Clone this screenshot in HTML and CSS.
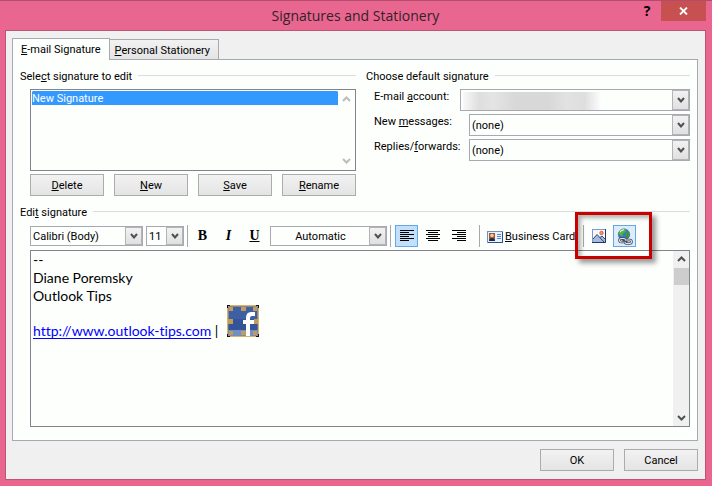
FILE: index.html
```
<!DOCTYPE html>
<html lang="en">
<head>
  <meta charset="UTF-8" />
  <title>Signatures and Stationery</title>
  <meta name="viewport" content="width=device-width, initial-scale=1.0"/>
  <link rel="stylesheet" href="styles.css">
</head>
<body>
  <div class="window">
    <header class="titlebar">
      <h1>Signatures and Stationery</h1>
      <div class="window-buttons">
        <button class="help" aria-label="Help">?</button>
        <button class="close" aria-label="Close">
          <svg width="9" height="8" viewBox="0 0 9 8"><path d="M1 0.5 L8 7.5 M8 0.5 L1 7.5" stroke="#fff" stroke-width="1.8"/></svg>
        </button>
      </div>
    </header>

    <main class="dialog">
      <nav class="tabs">
        <button class="tab active"><u>E</u>-mail Signature</button>
        <button class="tab"><u>P</u>ersonal Stationery</button>
      </nav>

      <div class="panel">
        <div class="top">
          <section>
            <div class="group-title"><label for="sigList">Sele<u>c</u>t signature to edit</label></div>
            <div class="list-box">
              <select id="sigList" size="4">
                <option selected>New Signature</option>
              </select>
              <div class="scroll disabled">
                <svg width="9" height="6" viewBox="0 0 9 6"><path d="M1 5 L4.500 1.500 L8 5"/></svg>
                <svg width="9" height="6" viewBox="0 0 9 6"><path d="M1 1 L4.500 4.500 L8 1"/></svg>
              </div>
            </div>
            <div class="list-actions">
              <button class="btn"><u>D</u>elete</button>
              <button class="btn"><u>N</u>ew</button>
              <button class="btn"><u>S</u>ave</button>
              <button class="btn"><u>R</u>ename</button>
            </div>
          </section>

          <section>
            <div class="group-title"><span>Choose default signature</span></div>
            <div class="defaults">
              <div class="field">
                <label for="account">E-mail <u>a</u>ccount:</label>
                <div class="combo wide">
                  <select id="account"><option></option></select>
                  <span class="hidden-account"></span>
                  <span class="arrow"><svg width="8" height="6" viewBox="0 0 8 6"><path d="M1 1 L4 4.500 L7 1"/></svg></span>
                </div>
              </div>
              <div class="field">
                <label for="newMsg">New <u>m</u>essages:</label>
                <div class="combo">
                  <select id="newMsg"><option>(none)</option></select>
                  <span class="arrow"><svg width="8" height="6" viewBox="0 0 8 6"><path d="M1 1 L4 4.500 L7 1"/></svg></span>
                </div>
              </div>
              <div class="field">
                <label for="replies">Replies/<u>f</u>orwards:</label>
                <div class="combo">
                  <select id="replies"><option>(none)</option></select>
                  <span class="arrow"><svg width="8" height="6" viewBox="0 0 8 6"><path d="M1 1 L4 4.500 L7 1"/></svg></span>
                </div>
              </div>
            </div>
          </section>
        </div>

        <div class="group-title edit-title"><span id="editLabel">Edi<u>t</u> signature</span></div>

        <div class="toolbar">
          <div class="combo font">
            <select aria-label="Font"><option>Calibri (Body)</option></select>
            <span class="arrow"><svg width="8" height="6" viewBox="0 0 8 6"><path d="M1 1 L4 4.500 L7 1"/></svg></span>
          </div>
          <div class="combo size">
            <select aria-label="Font size"><option>11</option></select>
            <span class="arrow"><svg width="8" height="6" viewBox="0 0 8 6"><path d="M1 1 L4 4.500 L7 1"/></svg></span>
          </div>
          <span class="sep"></span>
          <div class="styles">
            <button class="tool bold" aria-label="Bold">B</button>
            <button class="tool italic" aria-label="Italic">I</button>
            <button class="tool underline" aria-label="Underline">U</button>
          </div>
          <div class="combo color">
            <select aria-label="Font color"><option>Automatic</option></select>
            <span class="arrow"><svg width="8" height="6" viewBox="0 0 8 6"><path d="M1 1 L4 4.500 L7 1"/></svg></span>
          </div>
          <span class="sep"></span>
          <div class="aligns">
            <button class="tool on" aria-label="Align left">
              <svg width="14" height="12" viewBox="0 0 14 12"><path d="M0 .5h14M0 2.500h9M0 4.500h14M0 6.500h9M0 8.500h14M0 10.500h9"/></svg>
            </button>
            <button class="tool" aria-label="Center">
              <svg width="14" height="12" viewBox="0 0 14 12"><path d="M0 .5h14M2 2.500h10M0 4.500h14M2 6.500h10M0 8.500h14M2 10.500h10"/></svg>
            </button>
            <button class="tool" aria-label="Align right">
              <svg width="14" height="12" viewBox="0 0 14 12"><path d="M0 .5h14M5 2.500h9M0 4.500h14M5 6.500h9M0 8.500h14M5 10.500h9"/></svg>
            </button>
          </div>
          <span class="sep"></span>
          <button class="card">
            <svg width="16" height="12" viewBox="0 0 16 12">
              <rect x=".5" y=".5" width="15" height="11" fill="#e9f1fc" stroke="#6d8fc4"/>
              <path d="M15.500 1v10.500H1" fill="none" stroke="#26509c"/>
              <rect x="2" y="2" width="6" height="8" fill="#9c5a35"/>
              <circle cx="5" cy="4.500" r="1.800" fill="#f3c9a2"/>
              <path d="M2 10c0-4 6-4 6 0z" fill="#1f2a4a"/>
              <path d="M10 3.500h4M10 5.500h4M10 7.500h4" stroke="#5c86c8"/>
            </svg>
            <span><u>B</u>usiness Card</span>
          </button>
          <div class="insert">
            <span class="sep"></span>
            <button class="tool" aria-label="Picture">
              <svg width="14" height="14" viewBox="0 0 14 14">
                <rect x=".5" y=".5" width="13" height="13" fill="#f4f8fe" stroke="#7f98c6"/>
                <path d="M13.500 0v13.500H0" fill="none" stroke="#1d3770"/>
                <path d="M1 10 L5 5.500 L8 8.500 L10 7 L13 10 V13 H1 Z" fill="#a9bbdb"/>
                <path d="M1 10 L5 5.500 L12 13 M8 8.500 L10 7 L13 10" fill="none" stroke="#2c4478"/>
                <circle cx="9.500" cy="4" r="1.700" fill="#f0a070" stroke="#d2562a" stroke-width=".9"/>
              </svg>
            </button>
            <button class="tool on" aria-label="Hyperlink">
              <svg width="16" height="17" viewBox="0 0 16 17">
                <circle cx="7" cy="6.500" r="5.600" fill="#3c78c8" stroke="#2c568f" stroke-width=".7"/>
                <path d="M3 2.500 Q6 0 9 1.200 L8.500 4 L6 5.500 L5.500 8.500 L2.500 7 L1.600 5Z" fill="#4fb443"/>
                <path d="M9 5 L12 3.500 L12.500 7 L11 10 L8.500 9Z" fill="#379a32"/>
                <path d="M3 4 Q5 1.500 7 2" fill="none" stroke="#d5f3c8" stroke-width="1.300"/>
                <g fill="none" stroke="#434b5c" stroke-width="2.600"><rect x="2.500" y="10.500" width="6" height="3.500" rx="1.700"/><rect x="8" y="12" width="6.500" height="3.500" rx="1.700"/></g>
                <g fill="none" stroke="#e2e6ee" stroke-width="1.100"><rect x="2.500" y="10.500" width="6" height="3.500" rx="1.700"/><rect x="8" y="12" width="6.500" height="3.500" rx="1.700"/></g>
                <path d="M5.500 12.500 L10.500 14" stroke="#434b5c" stroke-width="1.400"/>
              </svg>
            </button>
            <span class="callout"></span>
          </div>
        </div>

        <div class="editor">
          <div class="editor-text" contenteditable="true" role="textbox" aria-labelledby="editLabel" spellcheck="false">
            <p>--</p>
            <p>Diane Poremsky</p>
            <p>Outlook Tips</p>
            <p class="links">
              <a href="http://www.outlook-tips.com">http://www.outlook-tips.com</a> |
              <svg class="fb" width="32" height="32" viewBox="0 0 32 32">
                <rect width="32" height="32" rx="1" fill="#d8b070"/>
                <rect x="1.500" y="1.500" width="29" height="29" fill="#3d5fa3"/>
                <rect x="1.500" y="14" width="29" height="11" fill="#34549a"/>
                <rect x="1.500" y="25" width="29" height="5.500" fill="#6f8fcb"/>
                <path d="M2 2h4v4H2zM14 2h5v4h-5zM26 2h4v4h-4zM1 14h5v5H1zM27 14h4v5h-4zM2 26h4v4H2zM14 26h5v4h-5zM26 26h4v4h-4z" fill="#c39a58"/>
                <path d="M0 0h3v1H1v2H0zM29 0h3v3h-1V1h-2zM0 29h1v2h2v1H0zM31 29h1v3h-3v-1h2z" fill="#111"/>
                <path d="M25 15h2v4h-2z" fill="#111"/>
                <path d="M19 31V19h-3v-4h3v-2q0-6 5-6h4v4h-3q-2 0-2 2v2h4v4h-4v12z" fill="#fff"/>
              </svg>
            </p>
          </div>
          <div class="scroll">
            <svg width="9" height="6" viewBox="0 0 9 6"><path d="M1 5 L4.500 1.500 L8 5"/></svg>
            <span class="thumb"></span>
            <svg width="9" height="6" viewBox="0 0 9 6"><path d="M1 1 L4.500 4.500 L8 1"/></svg>
          </div>
        </div>
      </div>

      <footer class="actions">
        <button class="btn">OK</button>
        <button class="btn">Cancel</button>
      </footer>
    </main>
  </div>
</body>
</html>
```

FILE: styles.css
```
:root {
  --frame: #e8668f;
  --face: #f0f0f0;
  --paper: #fdfffd;
  --line: #a6a8b2;
  --dark-line: #83838f;
  --hot: #c2e0fc;
}

* {
  box-sizing: border-box;
}

body {
  margin: 0;
  font-family: Roboto, "Noto Sans", sans-serif;
  font-size: 11px;
  line-height: 16px;
  color: #000;
}

button, select {
  font: inherit;
  color: inherit;
}

button {
  padding: 0;
  border: none;
  background: none;
}

u {
  text-underline-offset: 1px;
  text-decoration-thickness: 1px;
}

.window {
  display: flex;
  flex-direction: column;
  min-height: 100vh;
  padding: 0 6px 6px 5px;
  background: var(--frame);
  border-top: 1px solid #b04c6c;
}

/* Title bar */
.titlebar {
  position: relative;
  height: 29px;
}

.titlebar h1 {
  margin: 0;
  padding-top: 4px;
  font-family: "Open Sans", sans-serif;
  font-size: 14px;
  line-height: 22px;
  font-weight: 400;
  text-align: center;
  color: #33222a;
}

.window-buttons {
  position: absolute;
  top: 0;
  right: 0;
  display: flex;
}

.help {
  width: 28px;
  height: 20px;
  font-family: "Open Sans", sans-serif;
  font-size: 14px;
  font-weight: 700;
}

.close {
  display: flex;
  align-items: center;
  justify-content: center;
  width: 45px;
  height: 20px;
  background: #c75050;
}

/* Dialog body */
.dialog {
  flex: 1;
  display: flex;
  flex-direction: column;
  padding: 7px 7px 8px 6px;
  background: var(--face);
  border: 1px solid #bd5577;
}

.tabs {
  display: flex;
  align-items: flex-end;
}

.tab {
  height: 20px;
  padding: 2px 8px 0 5px;
  background: linear-gradient(#f2f2f2, #e4e4e4);
  border: 1px solid var(--line);
  border-width: 1px 1px 0 0;
}

.tab.active {
  position: relative;
  height: 22px;
  margin-bottom: -1px;
  padding: 1px 8px 0;
  background: var(--paper);
  border-left-width: 1px;
}

.panel {
  flex: 1;
  display: flex;
  flex-direction: column;
  padding: 7px 7px 13px;
  background: var(--paper);
  border: 1px solid var(--line);
}

.top {
  display: grid;
  grid-template-columns: 336fr 324fr;
  column-gap: 10px;
}

.group-title {
  display: flex;
  align-items: center;
  gap: 6px;
  height: 17px;
}

.group-title > * {
  padding-top: 2px;
}

.group-title::after {
  content: "";
  flex: 1;
  height: 1px;
  background: #dcdcdc;
}

.list-box {
  display: flex;
  height: 82px;
  margin: 5px 0 3px 10px;
  padding: 1px;
  border: 1px solid var(--dark-line);
}

.list-box select {
  flex: 1;
  min-width: 0;
  padding: 0;
  border: none;
  outline: none;
  background: var(--paper);
  overflow: hidden;
}

.list-box option {
  min-height: 14px;
  padding: 1px 0 0;
}

.list-box option:checked {
  background: #3399ff linear-gradient(#3399ff, #3399ff);
  -webkit-text-fill-color: #fff;
}

.list-actions {
  display: flex;
  gap: 10px;
  margin-left: 10px;
}

.list-actions .btn {
  flex: 1;
}

.btn {
  height: 22px;
  padding-top: 1px;
  background: linear-gradient(#f2f2f2, #e4e4e4);
  border: 1px solid #acacac;
}

/* Scroll bars */
.scroll {
  display: flex;
  flex-direction: column;
  align-items: center;
  justify-content: space-between;
  width: 16px;
  padding: 5px 0;
  background: var(--face);
}

.scroll svg, .arrow svg {
  fill: none;
  stroke: #505050;
  stroke-width: 2;
}

.scroll.disabled {
  background: none;
}

.scroll.disabled svg {
  stroke: #bcbcbc;
}

.thumb {
  width: 15px;
  height: 17px;
  margin: 6px 0 auto;
  background: #cdcdcd;
}

/* Drop-downs */
.combo {
  position: relative;
  display: flex;
  width: 221px;
  height: 22px;
  border: 1px solid var(--line);
}

.combo.wide {
  width: 230px;
}

.combo select {
  flex: 1;
  min-width: 0;
  padding: 1px 18px 0 2px;
  appearance: none;
  border: none;
  border-radius: 0;
  background: var(--paper);
}

.arrow {
  position: absolute;
  top: 0;
  right: 0;
  bottom: 0;
  display: flex;
  align-items: center;
  justify-content: center;
  width: 17px;
  background: linear-gradient(#f2f2f2, #e0e0e0);
  border: 1px solid #b4b4b8;
  pointer-events: none;
}

.hidden-account {
  position: absolute;
  top: 2px;
  bottom: 0;
  left: 2px;
  width: 138px;
  background: linear-gradient(90deg, #f8f8f8, #dedede 12%, #e4e4e4 22%, #d8d8d8 38%, #d8d8d8 62%, #e2e2e2 75%, #dedede 88%, #fdfdfd);
  pointer-events: none;
}

.defaults {
  display: flex;
  flex-direction: column;
  gap: 3px;
  margin: 5px 0 0 8px;
}

.field {
  display: flex;
  justify-content: space-between;
}

/* Formatting toolbar */
.edit-title {
  margin-top: 7px;
}

.toolbar {
  display: flex;
  align-items: center;
  height: 22px;
  margin: 5px 0 3px 10px;
}

.toolbar .combo {
  height: 20px;
}

.toolbar .font {
  width: 113px;
}

.toolbar .size {
  width: 38px;
  margin: 0 3px;
}

.toolbar .color {
  width: 117px;
  margin-right: 3px;
}

.toolbar .color select {
  text-align-last: center;
}

.sep {
  width: 1px;
  height: 22px;
  background: #a8a8a8;
}

.tool {
  display: flex;
  align-items: center;
  justify-content: center;
  width: 23px;
  height: 22px;
  border: 1px solid transparent;
}

.tool.on {
  background: var(--hot);
  border-color: #66a7e8;
}

.styles, .aligns {
  display: flex;
  gap: 3px;
}

.styles {
  margin: 0 4px 0 3px;
  font-family: "Liberation Serif", serif;
  font-size: 14px;
  font-weight: 700;
}

.italic {
  font-style: italic;
}

.underline {
  text-decoration: underline;
}

.aligns {
  margin: 0 9px 0 4px;
  stroke: #000;
}

.card {
  display: flex;
  align-items: center;
  gap: 2px;
  margin: 0 8px 0 7px;
  padding-top: 1px;
}

.insert {
  position: relative;
  display: flex;
  gap: 3px;
}

.insert .tool.on {
  background: #dcecfb;
}

.callout {
  position: absolute;
  top: -13px;
  right: -16px;
  bottom: -12px;
  left: -8px;
  border: 3px solid #c80000;
  box-shadow: 4px 4px 5px rgba(0, 0, 0, 0.4), inset 3px 3px 4px rgba(0, 0, 0, 0.3);
  pointer-events: none;
}

/* Signature text */
.editor {
  flex: 1;
  display: flex;
  margin-left: 10px;
  border: 1px solid var(--dark-line);
}

.editor-text {
  flex: 1;
  padding: 0 2px;
  font-family: Lato, sans-serif;
  font-size: 14px;
  line-height: 18px;
  font-variant-ligatures: none;
  outline: none;
}

.editor-text p {
  margin: 0;
}

.editor-text a {
  color: #0000ff;
  text-decoration: underline 1px #0000ff;
  text-underline-offset: 2px;
  text-decoration-skip-ink: none;
}

.fb {
  margin-left: 5px;
  vertical-align: -1px;
}

.actions {
  display: flex;
  justify-content: flex-end;
  gap: 10px;
  margin-top: 8px;
}

.actions .btn {
  width: 74px;
}
```
